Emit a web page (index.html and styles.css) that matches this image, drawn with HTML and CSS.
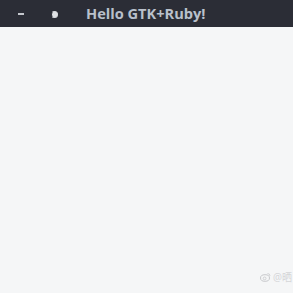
FILE: index.html
```html
<!DOCTYPE html>
<html lang="en">
<head>
    <meta charset="UTF-8">
    <title>Hello GTK+Ruby!</title>
    <link rel="stylesheet" href="styles.css">
</head>
<body>
    <div class="titlebar">
        <span class="btn-min"></span>
        <span class="btn-max"></span>
        <span class="title">Hello GTK+Ruby!</span>
    </div>
    <div class="content">
        <div class="mark">
            <svg width="11" height="10" viewBox="0 0 11 10">
                <ellipse cx="5" cy="6" rx="4.5" ry="3.3" fill="none" stroke="#c8c9cc" stroke-width="1"/>
                <circle cx="4.6" cy="6.4" r="1.4" fill="none" stroke="#c8c9cc" stroke-width="0.8"/>
                <path d="M7.5 1.5 Q10 1.5 10 4" fill="none" stroke="#c8c9cc" stroke-width="0.8"/>
            </svg>
            <span class="mark-text">@晒</span>
        </div>
    </div>
</body>
</html>
```

FILE: styles.css
```css
body {
    margin: 0;
    width: 293px;
    height: 293px;
    background-color: #f5f6f7;
    font-family: 'Open Sans', 'Noto Sans CJK SC', sans-serif;
    overflow: hidden;
}
.titlebar {
    height: 27px;
    background-color: #2b2d36;
    display: flex;
    align-items: center;
}
.btn-min {
    width: 6px;
    height: 2px;
    margin-left: 18px;
    margin-top: 1px;
    background-color: #c4c7cd;
}
.btn-max {
    width: 5px;
    height: 5px;
    margin-left: 27px;
    margin-top: 1px;
    border-radius: 50%;
    border: 1px solid #d8dade;
    border-left-color: #2b2d36;
    background-color: #e0e2e5;
}
.title {
    margin-left: 28px;
    margin-top: -1px;
    color: #b9c0cb;
    font-size: 14.6px;
    font-weight: bold;
}
.content {
    height: 266px;
    display: flex;
    justify-content: flex-end;
    align-items: flex-end;
}
.mark {
    display: flex;
    align-items: center;
    gap: 2px;
    margin-bottom: 9px;
    margin-right: 1px;
}
.mark-text {
    color: #d4d5d8;
    font-size: 10px;
}
```
